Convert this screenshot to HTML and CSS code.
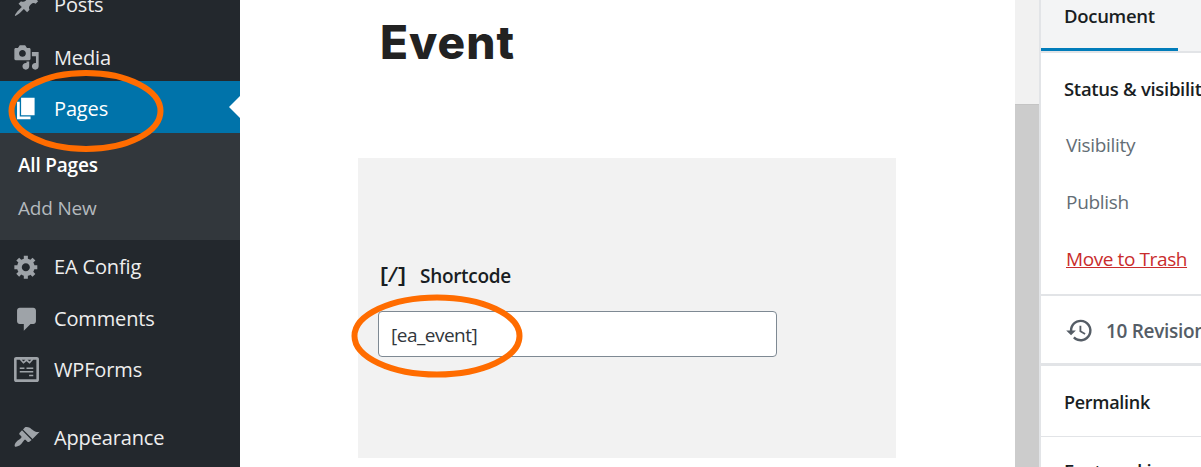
FILE: index.html
```html
<!DOCTYPE html>
<html lang="en">
<head>
  <meta charset="UTF-8" />
  <title>Edit Page</title>
  <link rel="stylesheet" href="styles.css">
</head>
<body>
  <div class="screen">
    <div class="adminmenu">
      <div class="menu-item lowered">
        <svg class="menu-icon" viewBox="0 0 20 20"><path d="M10.44 3.02l1.82-1.82 6.360 6.350-1.830 1.820c-1.050-.68-2.480-.57-3.410.36l-.75.75c-.92.93-1.040 2.350-.35 3.410l-1.830 1.820-2.410-2.410-2.800 2.790c-.42.42-3.380 2.710-3.800 2.290s1.860-3.390 2.280-3.810l2.790-2.790L4.100 9.360l1.830-1.820c1.050.69 2.480.57 3.400-.36l.75-.75c.93-.92 1.050-2.350.36-3.410z"/></svg>
        <span>Posts</span>
      </div>
      <div class="menu-item media">
        <svg class="menu-icon" viewBox="0 0 20 20"><path fill-rule="evenodd" d="M13 11V4c0-.55-.45-1-1-1h-1.670L9 1H5L3.670 3H2c-.55 0-1 .45-1 1v7c0 .55.45 1 1 1h10c.55 0 1-.45 1-1zM7 4.500c1.380 0 2.500 1.120 2.500 2.500S8.380 9.500 7 9.500 4.500 8.380 4.500 7 5.620 4.500 7 4.500zM14 6h5v10.500c0 1.380-1.120 2.500-2.500 2.500S14 17.880 14 16.500s1.120-2.500 2.500-2.500c.17 0 .34.020.5.050V9h-3V6zm-4 8.050V13h2v3.500c0 1.380-1.120 2.500-2.500 2.500S7 17.880 7 16.500 8.120 14 9.500 14c.17 0 .34.020.5.050z"/></svg>
        <span>Media</span>
      </div>
      <div class="menu-item current lowered">
        <svg class="menu-icon" viewBox="0 0 20 20"><path d="M6 15V2h10v13H6zm-1 1h8v2H3V5h2v11z"/></svg>
        <span>Pages</span>
      </div>
      <div class="submenu">
        <div class="sub-item active">All Pages</div>
        <div class="sub-item">Add New</div>
      </div>
      <div class="menu-item">
        <svg class="menu-icon" viewBox="0 0 20 20"><path fill-rule="evenodd" d="M18 12h-2.180c-.17.7-.44 1.350-.81 1.930l1.540 1.540-2.100 2.100-1.540-1.540c-.58.360-1.230.640-1.910.810V19H8v-2.180c-.68-.17-1.330-.45-1.910-.81l-1.540 1.540-2.120-2.120 1.540-1.540c-.36-.58-.64-1.230-.81-1.910H1V9.030h2.170c.17-.7.44-1.350.81-1.930L2.440 5.560l2.120-2.120L6.100 4.980c.58-.360 1.230-.64 1.910-.81V2h3v2.180c.68.170 1.330.45 1.910.81l1.540-1.540 2.120 2.120-1.540 1.540c.36.58.64 1.230.81 1.910H18V12zm-8.500 1.500c1.660 0 3-1.340 3-3s-1.340-3-3-3-3 1.340-3 3 1.340 3 3 3z"/></svg>
        <span>EA Config</span>
      </div>
      <div class="menu-item">
        <svg class="menu-icon" viewBox="0 0 20 20"><path d="M5 2h10c1.100 0 2 .9 2 2v8c0 1.100-.9 2-2 2h-2l-5 5v-5H5c-1.100 0-2-.9-2-2V4c0-1.100.9-2 2-2z"/></svg>
        <span>Comments</span>
      </div>
      <div class="menu-item short">
        <svg class="menu-icon" viewBox="0 0 26 26"><path fill-rule="evenodd" d="M3 1h20c1.100 0 2 .9 2 2v20c0 1.100-.9 2-2 2H3c-1.100 0-2-.9-2-2V3c0-1.100.9-2 2-2zm.5 2.500v19h19v-19h-3L16 7.500 13 5l-3 2.500-3.500-4h-3zm3 7.500h4.500v1.500H6.500V11zm6.500 0h6.500v1.500H13V11zm-6.500 3.500h13V16h-13v-1.500zm9 3.500h4v1.500h-4V18zM8.500 3.500L10 5.300l2-1.800H8.500zm5.500 0l2 1.800 1.500-1.800H14z"/></svg>
        <span>WPForms</span>
      </div>
      <div class="menu-item appearance">
        <svg class="menu-icon" viewBox="0 0 20 20"><path d="M14.480 11.060L7.410 3.990l1.500-1.500c.5-.56 2.300-.47 3.510.32 1.210.8 1.430 1.280 2.910 2.100 1.180.64 2.450 1.260 4.450.85zm-.71.71L6.700 4.700 4.930 6.470c-.39.39-.39 1.020 0 1.410l1.060 1.060c.39.39.39 1.030 0 1.420-.6.6-1.430 1.110-2.210 1.690-.35.26-.7.53-1.010.84C1.430 13.710.87 16.070 1.400 16.600c.53.53 2.890-.03 4.290-1.360.31-.31.58-.66.84-1.010.58-.78 1.090-1.610 1.690-2.210.39-.39 1.030-.39 1.420 0l1.060 1.060c.39.39 1.020.39 1.410 0z"/></svg>
        <span>Appearance</span>
      </div>
    </div>

    <div class="editor">
      <h1 class="post-title">Event</h1>
      <div class="shortcode-block">
        <div class="shortcode-label">
          <span class="shortcode-icon">[/]</span>
          <span>Shortcode</span>
        </div>
        <div class="shortcode-input">[ea_event]</div>
      </div>
    </div>

    <div class="scroll-track">
      <div class="scroll-top"></div>
    </div>

    <div class="sidebar">
      <div class="tabs">
        <div class="tab active">Document</div>
      </div>
      <div class="panel status">
        <div class="panel-title">Status &amp; visibility</div>
        <div class="panel-row">Visibility</div>
        <div class="panel-row">Publish</div>
        <div class="panel-row"><a class="trash" href="#">Move to Trash</a></div>
      </div>
      <div class="panel revisions">
        <svg class="revisions-icon" viewBox="0 0 24 24"><path d="M13 3a9 9 0 0 0-9 9H1l4 4 4-4H6a7 7 0 1 1 2.050 4.950l-1.420 1.420A9 9 0 1 0 13 3zm-1 5v5l4.280 2.540.72-1.210-3.500-2.080V8H12z"/></svg>
        <span>10 Revisions</span>
      </div>
      <div class="panel permalink">
        <div class="panel-title">Permalink</div>
      </div>
      <div class="panel featured">
        <div class="panel-title">Featured image</div>
      </div>
    </div>

    <svg class="mark mark-pages" viewBox="0 0 156 82"><ellipse cx="78" cy="41" rx="74.500" ry="38"/></svg>
    <svg class="mark mark-input" viewBox="0 0 172 84"><ellipse cx="86" cy="42" rx="82.500" ry="38.500"/></svg>
  </div>
</body>
</html>
```

FILE: styles.css
```css
html, body {
  margin: 0;
  padding: 0;
  height: 100%;
  overflow: hidden;
}

body {
  font-family: "Open Sans", "Noto Sans", sans-serif;
  color: #23282d;
  background: #fff;
}

.screen {
  position: relative;
  display: flex;
  width: 1201px;
  height: 467px;
  overflow: hidden;
}

/* admin menu */
.adminmenu {
  width: 240px;
  flex-shrink: 0;
  margin-top: -23px;
  background: #23282d;
  color: #eee;
  font-size: 20px;
}

.menu-item {
  display: flex;
  align-items: center;
  gap: 14px;
  height: 52px;
  padding-left: 13px;
  box-sizing: border-box;
  letter-spacing: -0.15px;
}

.menu-item.lowered {
  padding-top: 2px;
}

.menu-item.media {
  padding-top: 4px;
}

.menu-item.short {
  height: 51px;
}

.menu-item.current {
  position: relative;
  background: #0073aa;
  color: #fff;
}

.menu-item.current::after {
  content: "";
  position: absolute;
  right: 0;
  top: 15px;
  border: 11px solid transparent;
  border-right-color: #fff;
  border-left: 0;
}

.menu-item.appearance {
  margin-top: 16px;
}

.menu-icon {
  width: 27px;
  height: 27px;
  flex-shrink: 0;
  fill: #9ea3a8;
}

.current .menu-icon {
  fill: #fff;
}

.submenu {
  height: 107px;
  padding-top: 11px;
  box-sizing: border-box;
  background: #32373c;
  font-size: 19px;
  letter-spacing: -0.2px;
}

.sub-item {
  height: 43px;
  line-height: 43px;
  padding-left: 18px;
  color: #b4b9be;
}

.sub-item.active {
  color: #fff;
  font-weight: 600;
}

/* editor canvas */
.editor {
  width: 775px;
  flex-shrink: 0;
  box-sizing: border-box;
  padding-left: 118px;
}

.post-title {
  margin: 12px 0 0 22px;
  height: 146px;
  font-family: Inter, "Liberation Sans", sans-serif;
  font-size: 46px;
  line-height: 60px;
  font-weight: 800;
  letter-spacing: 1px;
  color: #222;
}

.shortcode-block {
  width: 538px;
  height: 300px;
  box-sizing: border-box;
  padding: 105px 119px 0 20px;
  background: #f2f2f2;
}

.shortcode-label {
  display: flex;
  align-items: center;
  gap: 15px;
  height: 26px;
  margin-bottom: 22px;
  font-size: 19px;
  font-weight: 600;
  letter-spacing: -0.3px;
  color: #191e23;
}

.shortcode-icon {
  width: 27px;
  font-family: "Liberation Mono", monospace;
  font-size: 20px;
  font-weight: 700;
  letter-spacing: -3px;
}

.shortcode-input {
  height: 46px;
  box-sizing: border-box;
  line-height: 46px;
  padding-left: 12px;
  border: 1px solid #7e8993;
  border-radius: 4px;
  background: #fff;
  font-size: 19px;
  letter-spacing: -0.5px;
  color: #32373c;
}

/* scrollbar */
.scroll-track {
  width: 26px;
  flex-shrink: 0;
  background: #ccc;
  border-right: 2px solid #e2e4e7;
  box-sizing: border-box;
}

.scroll-top {
  height: 105px;
  background: #f1f1f1;
  border-bottom: 1px solid #c4c4c4;
  box-sizing: border-box;
}

/* settings sidebar */
.sidebar {
  flex: 1;
  min-width: 0;
  overflow: hidden;
  font-size: 19px;
  letter-spacing: -0.3px;
  white-space: nowrap;
}

.tabs {
  height: 53px;
  box-sizing: border-box;
  background: #f3f4f5;
  border-bottom: 2px solid #e2e4e7;
}

.tab {
  width: 137px;
  height: 51px;
  box-sizing: border-box;
  padding-left: 23px;
  line-height: 31px;
  font-weight: 600;
  font-size: 18.500px;
  color: #191e23;
}

.tab.active {
  border-bottom: 3px solid #007cba;
}

.panel {
  padding-left: 23px;
  box-sizing: border-box;
  border-bottom: 1px solid #e2e4e7;
}

.panel-title {
  font-size: 18.500px;
  font-weight: 600;
  color: #191e23;
}

.status {
  height: 243px;
  padding-top: 23px;
  border-bottom-width: 2px;
}

.panel-row {
  margin-top: 32px;
  height: 25px;
  line-height: 25px;
  padding-left: 2px;
  color: #636d75;
}

.trash {
  color: #c92c2c;
  letter-spacing: -0.4px;
}

.revisions {
  display: flex;
  align-items: center;
  gap: 12px;
  height: 70px;
  border-bottom-width: 3px;
  padding: 2px 0 0 24px;
  color: #555d66;
  font-weight: 600;
}

.revisions-icon {
  width: 29px;
  height: 29px;
  flex-shrink: 0;
  fill: #555d66;
}

.permalink {
  height: 71px;
  padding-top: 24px;
}

.permalink .panel-title {
  font-size: 18px;
}

.featured {
  padding-top: 21px;
  border-bottom: 0;
}

/* orange annotation circles */
.mark {
  position: absolute;
  fill: none;
  stroke: #ff6c00;
  stroke-width: 6;
}

.mark-pages {
  left: 8px;
  top: 70px;
  width: 156px;
  height: 82px;
}

.mark-input {
  left: 351px;
  top: 294px;
  width: 172px;
  height: 84px;
}
```
